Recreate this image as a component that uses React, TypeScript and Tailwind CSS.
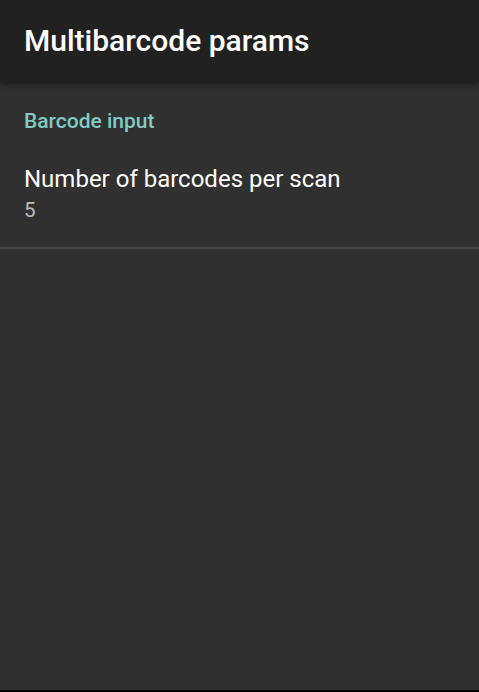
export default function App() {
  return (
    <div className="w-[479px] h-[692px] flex flex-col bg-[#303030] font-['Roboto',sans-serif] overflow-hidden">
      <header className="relative h-[82px] shrink-0 flex items-center px-6 bg-[#212121] shadow-[0_2px_6px_rgba(0,0,0,0.5)] z-10">
        <h1 className="text-[30px] font-medium text-white leading-none">Multibarcode params</h1>
      </header>
      <main className="flex-1 flex flex-col">
        <div className="px-6 pt-[29px] pb-[13px]">
          <p className="text-[21px] font-medium text-[#80cbc4] leading-none">Barcode input</p>
        </div>
        <div className="px-6 pt-[17px] pb-[23px] border-b-2 border-[#464646]">
          <p className="text-[24px] text-white leading-[34px]">Number of barcodes per scan</p>
          <p className="text-[20.5px] text-[#bdbdbd] leading-[28px]">5</p>
        </div>
      </main>
      <div className="h-[2px] bg-black shrink-0" />
    </div>
  );
}
